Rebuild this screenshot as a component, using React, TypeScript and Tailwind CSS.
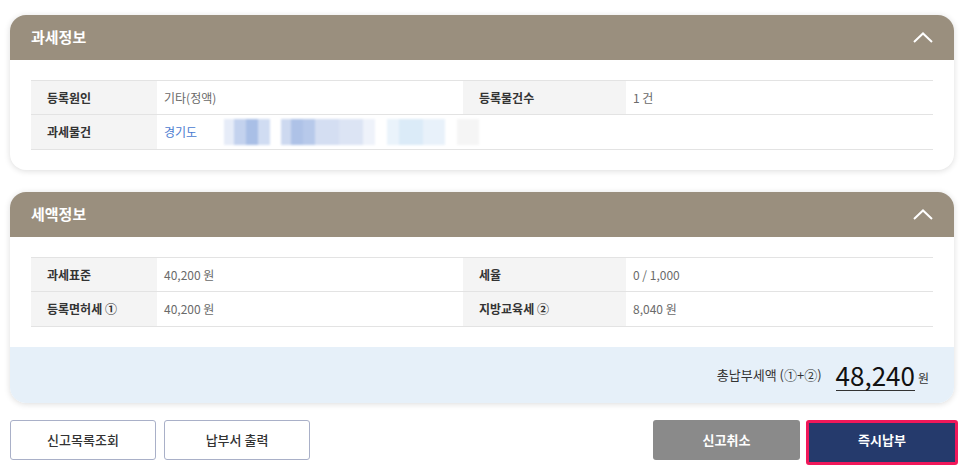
import type { ReactNode } from "react";

const FONT = { fontFamily: '"Noto Sans CJK KR", "Noto Sans", sans-serif' };

function Chevron() {
  return (
    <svg width="20" height="11" viewBox="0 0 20 11" fill="none">
      <path d="M1 10L10 1.5L19 10" stroke="white" strokeWidth="2" />
    </svg>
  );
}

function Card({ title, children }: { title: string; children: ReactNode }) {
  return (
    <section className="ml-[10px] mr-[12px] overflow-hidden rounded-2xl bg-white shadow-[0_1px_6px_rgba(0,0,0,0.14)]">
      <header className="flex h-[45px] items-center justify-between bg-[#9a8f7e] pl-[21px] pr-[21px]">
        <h2 className="text-[15px] font-bold text-white">{title}</h2>
        <Chevron />
      </header>
      {children}
    </section>
  );
}

function Row({ cells, last }: { cells: [string, ReactNode, string, ReactNode]; last?: boolean }) {
  return (
    <div
      className={
        "grid h-[34px] grid-cols-[126px_306px_163px_1fr] whitespace-nowrap text-[12px] " +
        (last ? "" : "border-b border-[#e3e3e3]")
      }
    >
      <div className="flex items-center bg-[#f4f4f4] pl-4 font-bold text-[#333]">{cells[0]}</div>
      <div className="flex items-center pl-[7px] text-[#6a6a6a]">{cells[1]}</div>
      <div className="flex items-center bg-[#f4f4f4] pl-4 font-bold text-[#333]">{cells[2]}</div>
      <div className="flex items-center pl-[7px] text-[#6a6a6a]">{cells[3]}</div>
    </div>
  );
}

function Blurred() {
  const blocks = [
    ["w-[10px]", "bg-[#e6ecf8]"],
    ["w-[12px]", "bg-[#c3d2ee]"],
    ["w-[12px]", "bg-[#a9bfe6]"],
    ["w-[12px]", "bg-[#d0dcf2]"],
    ["w-[11px]", "bg-transparent"],
    ["w-[10px]", "bg-[#cdd9f0]"],
    ["w-[12px]", "bg-[#aec2e7]"],
    ["w-[12px]", "bg-[#b7c9ea]"],
    ["w-[24px]", "bg-[#d4def2]"],
    ["w-[24px]", "bg-[#dce4f4]"],
    ["w-[12px]", "bg-[#eef2fa]"],
    ["w-[12px]", "bg-transparent"],
    ["w-[12px]", "bg-[#eaf3fb]"],
    ["w-[24px]", "bg-[#dbebf8]"],
    ["w-[22px]", "bg-[#e8f1fa]"],
    ["w-[12px]", "bg-transparent"],
    ["w-[22px]", "bg-[#f5f5f5]"],
  ];
  return (
    <div className="ml-[27px] flex h-[26px] blur-[1px]">
      {blocks.map(([w, c], i) => (
        <span key={i} className={`${w} ${c} h-full`} />
      ))}
    </div>
  );
}

export default function App() {
  return (
    <div className="min-h-[473px] bg-white pt-[15px]" style={FONT}>
      <Card title="과세정보">
        <div className="px-[21px] pt-[20px] pb-[20px]">
          <div className="border-y border-[#e3e3e3]">
            <Row cells={["등록원인", "기타(정액)", "등록물건수", "1 건"]} />
            <div className="grid h-[34px] grid-cols-[126px_1fr] whitespace-nowrap text-[12px]">
              <div className="flex items-center bg-[#f4f4f4] pl-4 font-bold text-[#333]">과세물건</div>
              <div className="flex items-center pl-[7px]">
                <span className="text-[#4a7bd0]">경기도</span>
                <Blurred />
              </div>
            </div>
          </div>
        </div>
      </Card>

      <div className="h-[22px]" />

      <Card title="세액정보">
        <div className="px-[21px] pt-[20px] pb-[20px]">
          <div className="border-y border-[#e3e3e3]">
            <Row cells={["과세표준", "40,200 원", "세율", "0 / 1,000"]} />
            <Row last cells={["등록면허세 ①", "40,200 원", "지방교육세 ②", "8,040 원"]} />
          </div>
        </div>
        <div className="flex h-[56px] items-center justify-end bg-[#e6f0f9] pr-[25px]">
          <span className="mr-[14px] text-[13px] text-[#333]">총납부세액 (①+②)</span>
          <span className="border-b border-[#333] text-[26px] leading-[30px] text-[#111]">48,240</span>
          <span className="ml-[3px] mt-[6px] text-[12px] text-[#333]">원</span>
        </div>
      </Card>

      <div className="mt-[17px] flex items-start pl-[10px] pr-[8px]">
        <button className="flex h-[40px] w-[146px] items-center justify-center rounded-[3px] border border-[#a9b0c8] bg-white text-[13px] font-medium text-[#333]">
          신고목록조회
        </button>
        <button className="ml-[8px] flex h-[40px] w-[146px] items-center justify-center rounded-[3px] border border-[#a9b0c8] bg-white text-[13px] font-medium text-[#333]">
          납부서 출력
        </button>
        <div className="flex-1" />
        <button className="flex h-[40px] w-[147px] items-center justify-center rounded-[3px] bg-[#8a8a8a] text-[13px] font-bold text-white">
          신고취소
        </button>
        <button className="ml-[6px] flex h-[45px] w-[152px] items-center justify-center rounded-[3px] border-[3px] border-[#f0185a] bg-[#253a6c] pb-[5px] text-[13px] font-bold text-white">
          즉시납부
        </button>
      </div>
    </div>
  );
}
